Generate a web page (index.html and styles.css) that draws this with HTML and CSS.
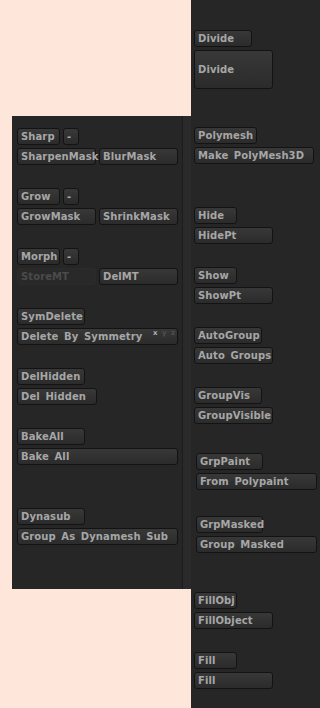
FILE: index.html
```html
<!DOCTYPE html>
<html lang="en">
<head>
    <meta charset="UTF-8">
    <meta name="viewport" content="width=device-width, initial-scale=1.0">
    <title>Geometry Tools</title>
    <link rel="stylesheet" href="styles.css">
</head>
<body>

    <div class="page">
        <div class="left-area">
            <div class="panel">
                <div class="panel-content">
                    <div class="group">
                        <div class="row">
                            <button class="btn w43">Sharp</button>
                            <button class="btn w16">-</button>
                        </div>
                        <div class="row">
                            <button class="btn w79">SharpenMask</button>
                            <button class="btn w79">BlurMask</button>
                        </div>
                    </div>
                    <div class="group">
                        <div class="row">
                            <button class="btn w43">Grow</button>
                            <button class="btn w16">-</button>
                        </div>
                        <div class="row">
                            <button class="btn w79">GrowMask</button>
                            <button class="btn w79">ShrinkMask</button>
                        </div>
                    </div>
                    <div class="group">
                        <div class="row">
                            <button class="btn w43">Morph</button>
                            <button class="btn w16">-</button>
                        </div>
                        <div class="row">
                            <button class="btn w79 disabled">StoreMT</button>
                            <button class="btn w79">DelMT</button>
                        </div>
                    </div>
                    <div class="group">
                        <div class="row">
                            <button class="btn w68">SymDelete</button>
                        </div>
                        <div class="row">
                            <button class="btn w161">Delete By Symmetry
                                <span class="axis"><span class="on">x</span> y z</span>
                            </button>
                        </div>
                    </div>
                    <div class="group">
                        <div class="row">
                            <button class="btn w68">DelHidden</button>
                        </div>
                        <div class="row">
                            <button class="btn w80">Del Hidden</button>
                        </div>
                    </div>
                    <div class="group group-gap">
                        <div class="row">
                            <button class="btn w68">BakeAll</button>
                        </div>
                        <div class="row">
                            <button class="btn w161">Bake All</button>
                        </div>
                    </div>
                    <div class="group">
                        <div class="row">
                            <button class="btn w68">Dynasub</button>
                        </div>
                        <div class="row">
                            <button class="btn w161">Group As Dynamesh Sub</button>
                        </div>
                    </div>
                </div>
                <div class="panel-strip"></div>
            </div>
        </div>

        <div class="right-panel">
            <div class="rgroup g-divide">
                <button class="btn w58">Divide</button>
                <button class="btn w79 big">Divide</button>
            </div>
            <div class="rgroup g-poly">
                <button class="btn w63">Polymesh</button>
                <button class="btn w120">Make PolyMesh3D</button>
            </div>
            <div class="rgroup">
                <button class="btn w43">Hide</button>
                <button class="btn w79">HidePt</button>
            </div>
            <div class="rgroup">
                <button class="btn w43">Show</button>
                <button class="btn w79">ShowPt</button>
            </div>
            <div class="rgroup">
                <button class="btn w68">AutoGroup</button>
                <button class="btn w79">Auto Groups</button>
            </div>
            <div class="rgroup g-vis">
                <button class="btn w68">GroupVis</button>
                <button class="btn w79">GroupVisible</button>
            </div>
            <div class="rgroup g-shift g-paint">
                <button class="btn w67">GrpPaint</button>
                <button class="btn w121">From Polypaint</button>
            </div>
            <div class="rgroup g-shift g-masked">
                <button class="btn w67">GrpMasked</button>
                <button class="btn w121">Group Masked</button>
            </div>
            <div class="rgroup">
                <button class="btn w43">FillObj</button>
                <button class="btn w79">FillObject</button>
            </div>
            <div class="rgroup">
                <button class="btn w43">Fill</button>
                <button class="btn w79">Fill</button>
            </div>
        </div>
    </div>

</body>
</html>
```

FILE: styles.css
```css
body {
    margin: 0;
    background-color: #ffe6db;
    font-family: 'DejaVu Sans', sans-serif;
}

.page {
    display: flex;
    width: 320px;
    height: 708px;
}

.left-area {
    width: 191px;
    padding-top: 116px;
}

.panel {
    display: flex;
    margin-left: 12px;
    width: 179px;
    height: 473px;
    background-color: #262626;
}

.panel-content {
    display: flex;
    flex-direction: column;
    width: 170px;
    padding: 12px 0 0 5px;
    box-sizing: border-box;
}

.panel-strip {
    width: 8px;
    border-left: 1px solid #1c1c1c;
    background-color: #2a2a2a;
}

.group {
    display: flex;
    flex-direction: column;
    gap: 3px;
    margin-bottom: 23px;
}

.group-gap {
    margin-bottom: 43px;
}

.row {
    display: flex;
    gap: 3px;
}

.right-panel {
    display: flex;
    flex-direction: column;
    width: 129px;
    height: 708px;
    background-color: #262626;
    box-sizing: border-box;
    padding: 30px 0 0 3px;
}

.rgroup {
    display: flex;
    flex-direction: column;
    align-items: flex-start;
    gap: 3px;
    margin-bottom: 23px;
}

.g-divide {
    margin-bottom: 38px;
}

.g-poly {
    margin-bottom: 43px;
}

.g-vis {
    margin-bottom: 29px;
}

.g-shift {
    padding-left: 2px;
}

.g-paint {
    margin-bottom: 26px;
}

.g-masked {
    margin-bottom: 39px;
}

/* buttons */
.btn {
    position: relative;
    display: flex;
    align-items: center;
    height: 17px;
    margin: 0;
    padding: 0 0 0 3px;
    box-sizing: border-box;
    border: 1px solid #131313;
    border-radius: 3px;
    background: linear-gradient(to bottom, #383838, #2b2b2b);
    color: #a6a6a6;
    font-family: 'DejaVu Sans', sans-serif;
    font-weight: bold;
    font-size: 10px;
    letter-spacing: 0.1px;
    word-spacing: 2px;
    white-space: nowrap;
    text-align: left;
}

.btn.big {
    height: 39px;
}

.btn.disabled {
    background: #292929;
    border-color: #2b2b2b;
    color: #4b4b4b;
}

.axis {
    position: absolute;
    top: 0;
    right: 2px;
    font-size: 7px;
    font-weight: bold;
    letter-spacing: 0;
    word-spacing: 2px;
    color: #505050;
}

.axis .on {
    color: #b0b0b0;
}

.w16 { width: 16px; }
.w43 { width: 43px; }
.w58 { width: 58px; }
.w63 { width: 63px; }
.w67 { width: 67px; }
.w68 { width: 68px; }
.w79 { width: 79px; }
.w80 { width: 80px; }
.w120 { width: 120px; }
.w121 { width: 121px; }
.w161 { width: 161px; }
```
